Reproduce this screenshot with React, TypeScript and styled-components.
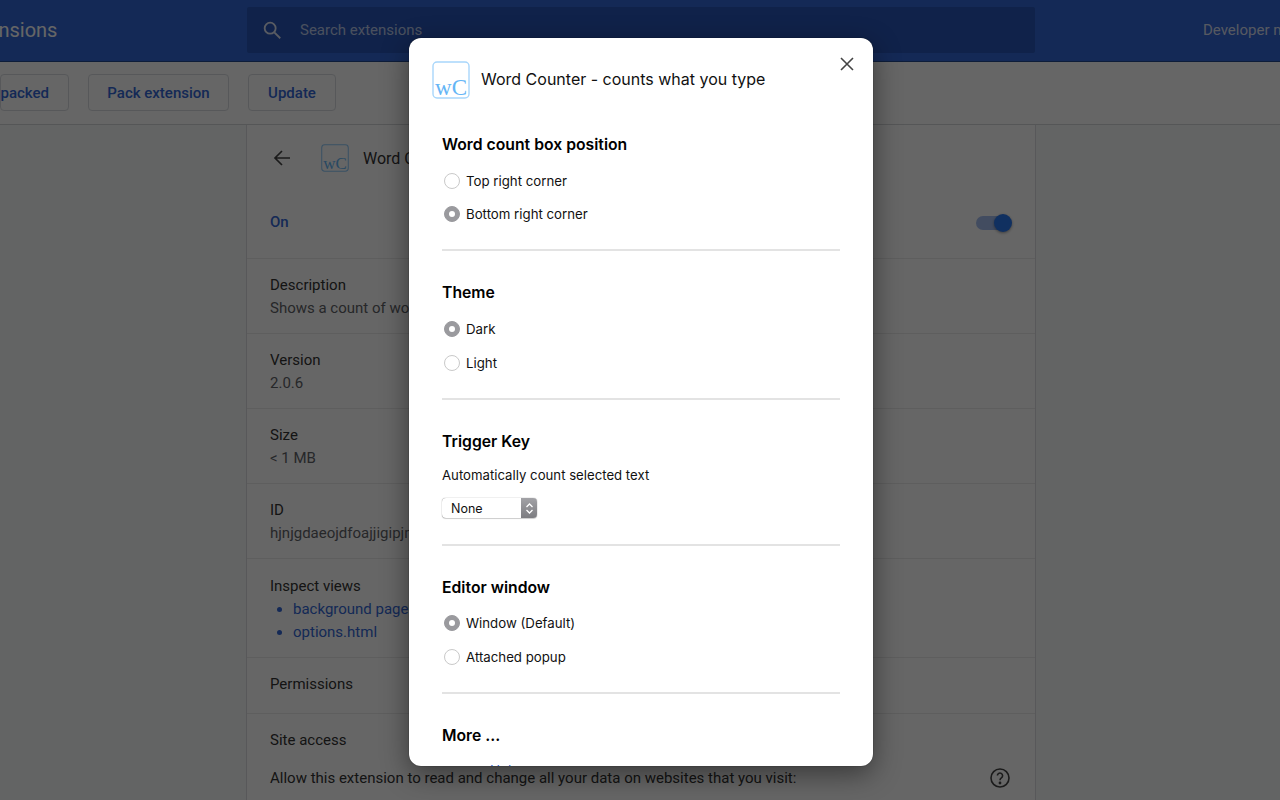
import React from "react";
import styled, { createGlobalStyle } from "styled-components";

const Global = createGlobalStyle`
  html, body { margin: 0; padding: 0; height: 100%; overflow: hidden; background: #f8f9fa; }
  #root { height: 100vh; }
  * { box-sizing: border-box; }
`;

const Page = styled.div`
  position: relative;
  width: 1280px;
  height: 800px;
  overflow: hidden;
  font-family: Roboto, "Liberation Sans", sans-serif;
  color: #333;
  background: #f8f9fa;
`;

const Header = styled.header`
  height: 62px;
  background: #3367d6;
  display: flex;
  align-items: center;
  position: relative;
  border-bottom: 1px solid #24498f;
`;

const HeaderTitle = styled.div`
  width: 247px;
  flex: none;
  color: #fff;
  font-size: 20px;
  font-weight: 400;
  margin-top: -2px;
  text-indent: -40px;
  white-space: nowrap;
`;

const Search = styled.div`
  width: 788px;
  height: 46px;
  margin-top: -2px;
  flex: none;
  background: #2a56b8;
  border-radius: 2px;
  display: flex;
  align-items: center;
  padding-left: 14px;
  gap: 16px;
  color: #fff;
  font-size: 15px;
`;

const SearchText = styled.span`
  color: #b9c8ea;
  margin-left: 1px;
`;

const DevMode = styled.div`
  margin-left: 168px;
  margin-top: -2px;
  color: #d7dff2;
  font-size: 15px;
  white-space: nowrap;
`;

const Toolbar = styled.div`
  height: 63px;
  background: #fff;
  border-bottom: 1px solid #d5d7da;
  display: flex;
  align-items: center;
  gap: 19px;
  padding-bottom: 1px;
`;

const ToolButton = styled.div<{ $w: number; $first?: boolean }>`
  width: ${(p) => p.$w}px;
  height: 37px;
  flex: none;
  border: 1px solid #dadce0;
  border-radius: 4px;
  color: #3367d6;
  font-size: 15px;
  font-weight: 500;
  display: flex;
  align-items: center;
  justify-content: ${(p) => (p.$first ? "flex-end" : "center")};
  padding-right: ${(p) => (p.$first ? "19px" : "0")};
  white-space: nowrap;
  overflow: hidden;
`;

const Content = styled.main`
  width: 790px;
  margin-left: 246px;
  height: 675px;
  background: #fff;
  border-left: 1px solid #dcdde0;
  border-right: 1px solid #dcdde0;
  font-size: 15px;
  line-height: 23px;
`;

const TitleRow = styled.div`
  height: 66px;
  display: flex;
  align-items: center;
  padding-left: 26px;
`;

const BackArrow = styled.svg`
  width: 18px;
  height: 18px;
  flex: none;
`;

const DetailIcon = styled.svg`
  width: 28px;
  height: 28px;
  flex: none;
  margin-left: 30px;
`;

const DetailName = styled.span`
  font-size: 16px;
  color: #333;
  margin-left: 14px;
`;

const OnRow = styled.div`
  height: 68px;
  display: flex;
  align-items: center;
  justify-content: space-between;
  padding: 0 25px 4px 23px;
  color: #3367d6;
  font-weight: 500;
  border-bottom: 1px solid #ebebeb;
`;

const Toggle = styled.div`
  position: relative;
  width: 34px;
  height: 14px;
  border-radius: 7px;
  background: #a5bff0;
`;

const Knob = styled.div`
  position: absolute;
  right: -2px;
  top: -2px;
  width: 18px;
  height: 18px;
  border-radius: 50%;
  background: #2a78f0;
  box-shadow: 0 1px 3px rgba(0, 0, 0, 0.4);
`;

const InfoRow = styled.div<{ $h: number; $top?: number }>`
  height: ${(p) => p.$h}px;
  padding: ${(p) => p.$top ?? 15}px 23px 0;
  border-bottom: 1px solid #ebebeb;
  color: #333;
`;

const InfoValue = styled.div`
  color: #5f6368;
`;

const LinkList = styled.ul`
  margin: 0;
  padding: 0 0 0 23px;
  color: #3367d6;
`;

const SiteAccessRow = styled.div`
  padding: 15px 23px 0;
  color: #333;
`;

const SiteLine = styled.div`
  display: flex;
  align-items: center;
  justify-content: space-between;
  margin-top: 14px;
  white-space: nowrap;
`;

const HelpIcon = styled.svg`
  width: 24px;
  height: 24px;
  flex: none;
`;

const Scrim = styled.div`
  position: absolute;
  inset: 0;
  background: rgba(0, 0, 0, 0.6);
`;

const Dialog = styled.section`
  position: absolute;
  left: 409px;
  top: 38px;
  width: 464px;
  height: 728px;
  background: #fff;
  border-radius: 12px;
  overflow: hidden;
  box-shadow: 0 0 1px rgba(0, 0, 0, 0.8), 0 8px 28px rgba(0, 0, 0, 0.45);
  color: #000;
  font-family: Inter, "Liberation Sans", Arial, sans-serif;
`;

const DialogHead = styled.div`
  height: 96px;
  display: flex;
  align-items: flex-start;
  padding: 23px 0 0 23px;
`;

const DialogIcon = styled.svg`
  width: 38px;
  height: 38px;
  flex: none;
`;

const DialogTitle = styled.div`
  margin: 7px 0 0 11px;
  font-size: 16px;
  line-height: 22px;
  color: #111;
  white-space: nowrap;
`;

const CloseIcon = styled.svg`
  position: absolute;
  right: 18px;
  top: 18px;
  width: 16px;
  height: 16px;
`;

const Body = styled.div`
  padding: 0 33px;
`;

const Section = styled.div<{ $last?: boolean }>`
  border-bottom: ${(p) => (p.$last ? "none" : "2px solid #e3e3e3")};
  padding-bottom: 18px;
  margin-bottom: 31px;
`;

const SectionTitle = styled.h2<{ $gap?: number }>`
  margin: 0 0 ${(p) => p.$gap ?? 9}px;
  font-size: 15.75px;
  line-height: 21px;
  font-weight: 600;
  color: #000;
`;

const RadioRow = styled.div<{ $h: number }>`
  height: ${(p) => p.$h}px;
  display: flex;
  align-items: center;
  font-size: 13.25px;
  color: #111;
`;

const Radio = styled.span<{ $on?: boolean }>`
  width: 16px;
  height: 16px;
  border-radius: 50%;
  flex: none;
  margin: 0 6px 0 2px;
  border: 1px solid ${(p) => (p.$on ? "#9a9a9e" : "#c9c9c9")};
  background: ${(p) => (p.$on ? "#9a9a9e" : "#fff")};
  display: flex;
  align-items: center;
  justify-content: center;
`;

const RadioDot = styled.span`
  width: 6px;
  height: 6px;
  border-radius: 50%;
  background: #fff;
`;

const Helper = styled.div`
  font-size: 13.2px;
  line-height: 18px;
  color: #111;
  margin-top: 14px;
`;

const Select = styled.div`
  width: 95px;
  height: 20px;
  margin: 14px 0 8px;
  border-radius: 4px;
  background: #fff;
  box-shadow: 0 0 1px rgba(0, 0, 0, 0.6), 0 1px 1px rgba(0, 0, 0, 0.15);
  display: flex;
  align-items: center;
  justify-content: space-between;
  font-size: 12.5px;
  color: #111;
  padding-left: 9px;
  overflow: hidden;
`;

const SelectCaret = styled.span`
  width: 16px;
  height: 20px;
  background: linear-gradient(#a2a2a6, #7c7c80);
  display: flex;
  align-items: center;
  justify-content: center;
`;

const CaretIcon = styled.svg`
  width: 9px;
  height: 13px;
`;

const MoreLinks = styled.ul`
  margin: 15px 0 0;
  padding: 0 0 0 48px;
  list-style: none;
  font-size: 13.5px;
  line-height: 18px;
  color: #3367d6;
`;

const WcIcon = ({ as: As, stroke, text }: { as: typeof DialogIcon; stroke: string; text: string }) => (
  <As viewBox="0 0 38 38">
    <rect x="1" y="1" width="36" height="36" rx="4" fill="none" stroke={stroke} strokeWidth="1.4" />
    <text x="19" y="34" textAnchor="middle" fontFamily="'Liberation Serif', serif" fontSize="23" fill={text}>
      wC
    </text>
  </As>
);

const radioGroups = {
  position: [
    ["Top right corner", false],
    ["Bottom right corner", true],
  ],
  theme: [
    ["Dark", true],
    ["Light", false],
  ],
  editor: [
    ["Window (Default)", true],
    ["Attached popup", false],
  ],
} as const;

const Radios = ({ items, rowHeight = 34 }: { items: readonly (readonly [string, boolean])[]; rowHeight?: number }) => (
  <>
    {items.map(([label, on]) => (
      <RadioRow key={label} $h={rowHeight}>
        <Radio $on={on}>{on && <RadioDot />}</Radio>
        {label}
      </RadioRow>
    ))}
  </>
);

export default function App() {
  return (
    <Page>
      <Global />
      <Header>
        <HeaderTitle>Extensions</HeaderTitle>
        <Search>
          <svg width="22" height="22" viewBox="0 0 24 24" fill="none" stroke="#dfe6f6" strokeWidth="2">
            <circle cx="10" cy="10" r="6" />
            <path d="M14.5 14.5 21 21" />
          </svg>
          <SearchText>Search extensions</SearchText>
        </Search>
        <DevMode>Developer mode</DevMode>
      </Header>
      <Toolbar>
        <ToolButton $w={69} $first>
          packed
        </ToolButton>
        <ToolButton $w={141}>Pack extension</ToolButton>
        <ToolButton $w={88}>Update</ToolButton>
      </Toolbar>
      <Content>
        <TitleRow>
          <BackArrow viewBox="0 0 18 18" fill="none" stroke="#444" strokeWidth="1.7">
            <path d="M17 9H2M9 2 2 9l7 7" />
          </BackArrow>
          <WcIcon as={DetailIcon} stroke="#90caf9" text="#64b5f6" />
          <DetailName>Word Counter</DetailName>
        </TitleRow>
        <OnRow>
          On
          <Toggle>
            <Knob />
          </Toggle>
        </OnRow>
        <InfoRow $h={75}>
          Description
          <InfoValue>Shows a count of words</InfoValue>
        </InfoRow>
        <InfoRow $h={75}>
          Version
          <InfoValue>2.0.6</InfoValue>
        </InfoRow>
        <InfoRow $h={75}>
          Size
          <InfoValue>&lt; 1 MB</InfoValue>
        </InfoRow>
        <InfoRow $h={75}>
          ID
          <InfoValue>hjnjgdaeojdfoajjigipjmf</InfoValue>
        </InfoRow>
        <InfoRow $h={99} $top={16}>
          Inspect views
          <LinkList>
            <li>background page</li>
            <li>options.html</li>
          </LinkList>
        </InfoRow>
        <InfoRow $h={56}>Permissions</InfoRow>
        <SiteAccessRow>
          Site access
          <SiteLine>
            Allow this extension to read and change all your data on websites that you visit:
            <HelpIcon viewBox="0 0 24 24" fill="none" stroke="#444" strokeWidth="1.6">
              <circle cx="12" cy="12" r="9" />
              <path d="M9.4 9.6a2.6 2.6 0 1 1 4 2.2c-1 .7-1.4 1.2-1.4 2.4" />
              <circle cx="12" cy="17" r=".6" fill="#444" />
            </HelpIcon>
          </SiteLine>
        </SiteAccessRow>
      </Content>
      <Scrim />
      <Dialog>
        <DialogHead>
          <WcIcon as={DialogIcon} stroke="#a8d6fb" text="#64b5f6" />
          <DialogTitle>Word Counter - counts what you type</DialogTitle>
          <CloseIcon viewBox="0 0 16 16" fill="none" stroke="#444" strokeWidth="1.6">
            <path d="M2 2l12 12M14 2 2 14" />
          </CloseIcon>
        </DialogHead>
        <Body>
          <Section>
            <SectionTitle>Word count box position</SectionTitle>
            <Radios items={radioGroups.position} rowHeight={33.5} />
          </Section>
          <Section>
            <SectionTitle>Theme</SectionTitle>
            <Radios items={radioGroups.theme} />
          </Section>
          <Section>
            <SectionTitle>Trigger Key</SectionTitle>
            <Helper>Automatically count selected text</Helper>
            <Select>
              None
              <SelectCaret>
                <CaretIcon viewBox="0 0 9 13" fill="none" stroke="#fff" strokeWidth="1.3">
                  <path d="M1.5 5 4.5 2l3 3M1.5 8l3 3 3-3" />
                </CaretIcon>
              </SelectCaret>
            </Select>
          </Section>
          <Section>
            <SectionTitle $gap={8}>Editor window</SectionTitle>
            <Radios items={radioGroups.editor} />
          </Section>
          <Section $last>
            <SectionTitle>More ...</SectionTitle>
            <MoreLinks>
              <li>Help</li>
            </MoreLinks>
          </Section>
        </Body>
      </Dialog>
    </Page>
  );
}
